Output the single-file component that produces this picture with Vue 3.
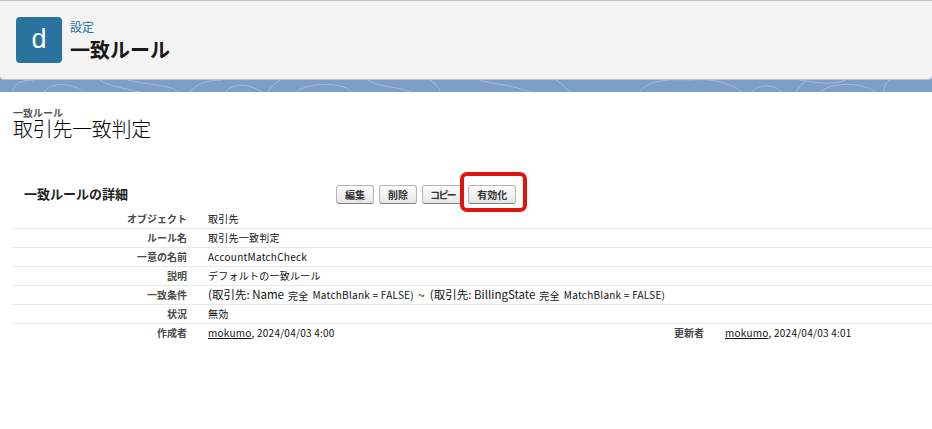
<template>
  <div class="page">
    <div class="top-band">
      <svg class="band-lines" width="932" height="92" viewBox="0 0 932 92" fill="none">
        <g stroke="#a3bddb" stroke-width="1">
          <path d="M12 92 C14 84 20 80 34 80" />
          <path d="M44 92 C52 82 70 82 84 92" />
          <path d="M100 80 C108 86 122 88 140 92" />
          <path d="M128 80 C150 86 170 84 178 92" />
          <path d="M190 92 C196 84 206 80 222 80" />
          <path d="M226 92 C232 84 246 82 262 92" />
          <path d="M280 80 C274 84 270 88 268 92" />
          <path d="M296 92 C304 84 340 80 352 92" />
          <path d="M368 80 C380 88 398 86 410 92" />
          <path d="M430 80 C436 84 440 88 440 92" />
          <path d="M480 80 C490 84 510 84 530 92" />
          <path d="M556 80 C562 84 566 88 570 92" />
          <path d="M640 92 C644 84 660 78 690 80 C716 78 730 84 742 92" />
          <path d="M752 92 C756 86 770 82 782 92" />
          <path d="M796 92 C800 86 804 82 806 80" />
          <path d="M820 92 C828 84 858 80 876 92" />
          <path d="M800 80 C820 84 838 84 846 80" />
          <path d="M884 92 C884 86 886 82 890 80" />
        </g>
      </svg>
      <header class="setup-header">
        <div class="setup-icon">d</div>
        <div class="setup-titles">
          <a class="setup-crumb">設定</a>
          <h1 class="setup-title">一致ルール</h1>
        </div>
      </header>
    </div>

    <div class="page-title">
      <div class="page-type">一致ルール</div>
      <div class="page-name">取引先一致判定</div>
    </div>

    <section class="detail">
      <div class="detail-head">
        <h2 class="detail-title">一致ルールの詳細</h2>
        <div class="buttons">
          <button v-for="b in buttons" :key="b" class="btn" :class="{ tight: b === 'コピー' }">{{ b }}</button>
          <span class="highlight"></span>
        </div>
      </div>

      <div v-for="row in rows" :key="row.label" class="row">
        <div class="label">{{ row.label }}</div>
        <div class="value" :class="{ 'value-wide': row.label2 }">
          <div v-if="row.condition" class="condition">
            <span v-for="(c, i) in conditions" :key="c" class="clause">
              <span class="big">(取引先: {{ c }}</span>
              <span class="kanzen">完全</span>
              <span>MatchBlank = FALSE)</span>
              <span v-if="i === 0" class="tilde">~</span>
            </span>
          </div>
          <template v-else-if="row.user">
            <a class="user">mokumo</a>, {{ row.date }}
          </template>
          <template v-else>{{ row.value }}</template>
        </div>
        <template v-if="row.label2">
          <div class="label label-right">{{ row.label2 }}</div>
          <div class="value"><a class="user">mokumo</a>, {{ row.date2 }}</div>
        </template>
      </div>
    </section>
  </div>
</template>

<script setup>
const buttons = ['編集', '削除', 'コピー', '有効化']
const conditions = ['Name', 'BillingState']

const rows = [
  { label: 'オブジェクト', value: '取引先' },
  { label: 'ルール名', value: '取引先一致判定' },
  { label: '一意の名前', value: 'AccountMatchCheck' },
  { label: '説明', value: 'デフォルトの一致ルール' },
  { label: '一致条件', condition: true },
  { label: '状況', value: '無効' },
  { label: '作成者', user: true, date: '2024/04/03 4:00', label2: '更新者', date2: '2024/04/03 4:01' }
]
</script>

<style>
html, body {
  background: #fff;
}
</style>

<style scoped>
.page {
  width: 932px;
  height: 429px;
  overflow: hidden;
  background: #fff;
  font-family: "Noto Sans CJK JP", "Liberation Sans", sans-serif;
  color: #111;
}

.top-band {
  position: relative;
  height: 92px;
  background: #7b9fc9;
}

.band-lines {
  position: absolute;
  left: 0;
  top: 0;
}

.setup-header {
  position: relative;
  box-sizing: border-box;
  height: 80px;
  display: flex;
  align-items: center;
  gap: 8px;
  padding: 0 16px;
  background: #f3f3f3;
  border-top: 1px solid #c4c4c4;
  border-bottom: 1px solid #bfbdb9;
  border-radius: 0 0 4px 4px;
}

.setup-icon {
  width: 46px;
  height: 46px;
  border-radius: 4px;
  background: #2a739e;
  color: #fff;
  font-family: "Liberation Sans", sans-serif;
  font-size: 27px;
  line-height: 44px;
  text-align: center;
}

.setup-titles {
  display: flex;
  flex-direction: column;
  padding-top: 4px;
}

.setup-crumb {
  font-size: 12px;
  line-height: 16px;
  color: #1b6fa8;
}

.setup-title {
  margin: 0;
  font-size: 20px;
  line-height: 30px;
  font-weight: 700;
  color: #181818;
}

.page-title {
  padding: 15px 0 0 13px;
}

.page-type {
  font-size: 10px;
  line-height: 12px;
  font-weight: 700;
  color: #555;
}

.page-name {
  font-size: 20px;
  line-height: 20px;
  font-weight: 300;
  letter-spacing: -0.3px;
  color: #000;
}

.detail {
  margin-top: 42px;
  margin-left: 12px;
}

.detail-head {
  display: flex;
  align-items: center;
  height: 26px;
  margin-bottom: 3px;
}

.detail-title {
  width: 324px;
  margin: 0;
  padding-left: 12px;
  box-sizing: border-box;
  font-size: 13px;
  line-height: 20px;
  font-weight: 700;
  color: #222;
}

.buttons {
  position: relative;
  display: flex;
  gap: 5px;
}

.btn {
  height: 19px;
  padding: 0 8px;
  border: 1px solid #b5b5b5;
  border-bottom-color: #7f7f7f;
  border-radius: 3px;
  background: linear-gradient(#fdfdfd, #e6e6e6);
  font-family: inherit;
  font-size: 10px;
  line-height: 17px;
  font-weight: 700;
  color: #333;
}

.btn.tight {
  padding: 0 7px;
  letter-spacing: -1.6px;
}

.highlight {
  position: absolute;
  left: 124px;
  top: -13px;
  width: 67px;
  height: 40px;
  box-sizing: border-box;
  border: 4px solid #e0140f;
  border-radius: 7px;
}

.row {
  display: flex;
  align-items: center;
  height: 19px;
  box-sizing: border-box;
  padding-bottom: 2px;
  border-bottom: 1px solid #e8e8e8;
  font-size: 10px;
}

.row:last-child {
  border-bottom: 0;
}

.label {
  flex: 0 0 auto;
  width: 175px;
  text-align: right;
  font-weight: 700;
  color: #4a4a4a;
}

.value {
  margin-left: 21px;
  color: #111;
  white-space: nowrap;
  letter-spacing: 0.25px;
}

.value-wide {
  width: 126px;
}

.label-right {
  width: 32px;
  margin-left: 338px;
}

.user {
  text-decoration: underline;
  color: #111;
}

.condition {
  display: flex;
  gap: 5px;
  align-items: center;
}

.clause {
  display: flex;
  gap: 4px;
  align-items: center;
}

.big {
  font-size: 11.5px;
  letter-spacing: 0;
}

.kanzen {
  font-size: 10px;
  margin-top: 2px;
}

.tilde {
  font-size: 12px;
}
</style>
